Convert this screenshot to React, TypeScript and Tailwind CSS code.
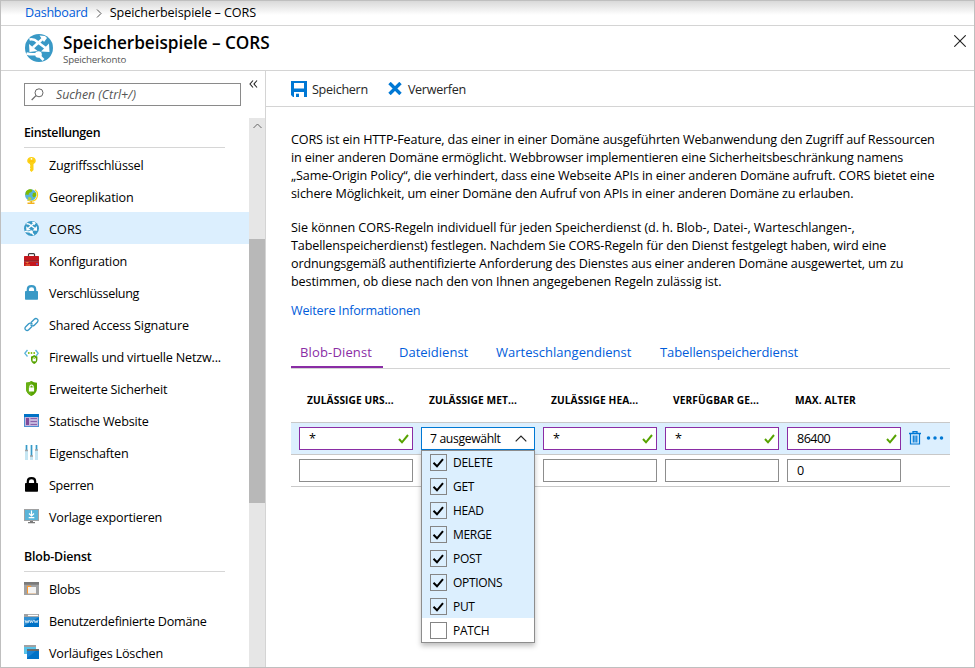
import type { ReactNode } from "react";

function Globe({ size }: { size: number }) {
  return (
    <svg width={size} height={size} viewBox="0 0 28 28" className="shrink-0">
      <circle cx="14" cy="14" r="14" fill="#3999c6" />
      <g fill="none" stroke="#fff" strokeWidth="2.6">
        <path d="M4.500 5.500C8 4.500 10 5.500 12.500 8L20.500 14" />
        <path d="M18 4.500L8 13.500" />
        <path d="M1.500 19.500C5 20.500 8 20.500 12 20" />
        <path d="M15 22.500L18.500 26" />
      </g>
      <g fill="#fff">
        <path d="M14.500 1.500L20 2L22 4L19 8Z" />
        <path d="M4 10L4.500 18L12.500 17Z" />
        <path d="M24 9.500L24.500 18L16 17.500Z" />
        <circle cx="13.500" cy="20.500" r="3.300" />
      </g>
    </svg>
  );
}

function Icon({ children }: { children: ReactNode }) {
  return (
    <svg width="15" height="15" viewBox="0 0 15 15" className="shrink-0">
      {children}
    </svg>
  );
}

const keyIcon = (
  <Icon>
    <path d="M7.500 0C10 0 11.800 1.500 11.800 3.800C11.800 5.500 10.600 6.500 9.500 7V13L7.500 15L6 13.500V12.300L6.600 11.500L6 10.700V9.700L6.600 8.900L6 8V7C4.400 6.500 3.200 5.500 3.200 3.800C3.200 1.500 5 0 7.500 0Z" fill="#fcd116" />
    <circle cx="7.500" cy="1.800" r=".9" fill="#fff" />
    <path d="M5 3.700H10V4.500H5Z" fill="#ffb900" />
  </Icon>
);
const geoIcon = (
  <Icon>
    <path d="M11 .8C15.200 4 14.200 12.200 7 12.200L3 11" fill="none" stroke="#fcd116" strokeWidth="1.200" />
    <path d="M6.500 12H8V13.400H10.500V15H3.500V13.400H6.500Z" fill="#f2b01e" />
    <circle cx="6.700" cy="5.900" r="5.700" fill="#59b4d9" />
    <path d="M2 2.500C4 0 7 0 8.500 .8L7.500 3L5 4L4.500 6L2.500 5.500L1.300 6Z" fill="#7fba00" />
    <path d="M9 4L11.800 3.500L12.300 6.500L10 8.500L8.300 7Z" fill="#7fba00" />
    <path d="M4.500 8L7 8.500L7.500 10L6 11.300L4 10.500Z" fill="#b8d432" />
  </Icon>
);
const toolboxIcon = (
  <Icon>
    <path d="M4.500 3.500V1.600Q4.500 .7 5.400 .7H9.600Q10.500 .7 10.500 1.600V3.500" fill="none" stroke="#3e3e3e" strokeWidth="1.200" />
    <rect x="0" y="3" width="15" height="4.800" rx=".5" fill="#c4171d" />
    <rect x="0" y="8.300" width="15" height="4.700" fill="#c4171d" />
    <rect x="0" y="7.300" width="15" height="1.200" fill="#7e1116" />
    <path d="M1 9H5L3.500 10.500ZM1.500 11.500H6V12.500H1.500Z" fill="#e8823a" />
    <rect x="12" y="10" width="2" height="2" fill="#804998" />
  </Icon>
);
const padlock = (color: string) => (
  <Icon>
    <path d="M3.800 7V4.500C3.800 2.200 5.200 1.200 7.500 1.200S11.200 2.200 11.200 4.500V7" fill="none" stroke={color} strokeWidth="2.200" />
    <rect x="1" y="6" width="13" height="8.800" rx=".7" fill={color} />
  </Icon>
);
const linkIcon = (
  <Icon>
    <g fill="none" stroke="#3999c6" strokeWidth="1.350" strokeLinecap="round">
      <path d="M7.300 5.200L10.300 2.200C12.300 .2 15.500 3 13.300 5.200L10.300 8.200C9.300 9.200 7.700 9 6.900 8" />
      <path d="M7.700 9.800L4.700 12.800C2.700 14.800 -.5 12 1.700 9.800L4.700 6.800C5.700 5.800 7.300 6 8.100 7" />
    </g>
  </Icon>
);
const firewallIcon = (
  <Icon>
    <path d="M3.500 1L.8 4.300L3.500 7.500M11.500 1L14.200 4.300L12 7" fill="none" stroke="#59b4d9" strokeWidth="1.300" />
    <g fill="#7fba00"><circle cx="4.800" cy="4" r=".9" /><circle cx="7.500" cy="4" r=".9" /><circle cx="10.200" cy="4" r=".9" /></g>
    <path d="M7 7.500Q8.800 7.300 10.200 6Q11.600 7.300 13.400 7.500V10.500C13.400 12.700 12 14.200 10.200 15C8.400 14.200 7 12.700 7 10.500Z" fill="#57a300" />
    <rect x="8.600" y="9.700" width="3.300" height="2.600" fill="#fff" />
    <path d="M9.200 10V9Q10.200 7.800 11.300 9V10" fill="none" stroke="#fff" strokeWidth=".7" />
  </Icon>
);
const shieldIcon = (
  <Icon>
    <path d="M2 1.700Q5.500 1.500 7.500 0Q9.500 1.500 13 1.700V7.500C13 11 10.700 13.500 7.500 15C4.300 13.500 2 11 2 7.500Z" fill="#57a300" />
    <path d="M2 1.700Q5.500 1.500 7.500 0L7.500 15C4.300 13.500 2 11 2 7.500Z" fill="#68b015" />
    <rect x="4.900" y="6.500" width="5.200" height="4" fill="#fff" />
    <path d="M5.900 6.700V5Q7.500 2.900 9.100 5V6.700" fill="none" stroke="#fff" strokeWidth="1.100" />
  </Icon>
);
const websiteIcon = (
  <Icon>
    <rect y="1" width="15" height="13" fill="#4f8fd0" />
    <rect y="1" width="15" height="3" fill="#0072c6" />
    <rect x="1" y="4" width="13" height="9" fill="#c4b5dc" />
    <rect x="2" y="5" width="3" height="7" fill="#804998" />
    <path d="M6.500 5.500H13M6.500 8.500H13M6.500 11.500H13" stroke="#8a62ab" />
  </Icon>
);
const slidersIcon = (
  <Icon>
    <rect x="1" y="0" width="3" height="15" fill="#c5e6f3" />
    <rect x="6" y="0" width="3" height="15" fill="#c5e6f3" />
    <rect x="11" y="0" width="3" height="15" fill="#c5e6f3" />
    <path d="M2.500 0V6M7.500 0V11M12.500 0V5" stroke="#3999c6" strokeWidth="1.200" />
    <path d="M1 5.500H4M6 11H9M11 5H14" stroke="#a0a1a2" strokeWidth="1.500" />
  </Icon>
);
const exportIcon = (
  <Icon>
    <rect y="0" width="15" height="12" fill="#a0a1a2" />
    <rect x="1" y="1" width="13" height="10" fill="#59b4d9" />
    <path d="M7.500 1.500V6.500M5 4.500L7.500 7L10 4.500M4.700 8.700H10.300" fill="none" stroke="#fff" strokeWidth="1.200" />
    <path d="M6 12H9V13H11V14.300H4V13H6Z" fill="#7a7a7a" />
  </Icon>
);
const blobsIcon = (
  <Icon>
    <rect y="1" width="15" height="13" fill="#a0a1a2" />
    <rect y="1" width="15" height="2.700" fill="#7a7a7a" />
    <path d="M3 4.700H6.500L7.500 6H12V12.500H3Z" fill="#ff9a2e" />
    <rect x="4" y="6" width="8" height="6.500" fill="#f3f3f3" />
  </Icon>
);
const domainIcon = (
  <Icon>
    <rect y="1" width="15" height="13" fill="#0072c6" />
    <rect y="1" width="15" height="3" fill="#a0a1a2" />
    <rect x="4" y="1.800" width="10" height="1.300" fill="#fff" />
    <path d="M0 4H15L0 13Z" fill="#3390d2" />
    <path d="M1 7L2 9.800L3 7.700L4 9.800L5 7M5.700 7L6.600 9.800L7.600 7.700L8.500 9.800L9.500 7M10.200 7L11.100 9.800L12.100 7.700L13 9.800L14 7" fill="none" stroke="#fff" strokeWidth=".7" />
  </Icon>
);
const softDeleteIcon = (
  <Icon>
    <rect x="0" y="0" width="12" height="9" fill="#59c3e8" />
    <rect x="0" y="0" width="12" height="2" fill="#a0a1a2" />
    <rect x="3" y="4" width="12" height="10" fill="#0072c6" />
    <rect x="3" y="4" width="12" height="2" fill="#6b6b6b" />
    <path d="M3 6H12L3 13Z" fill="#1a82d2" />
  </Icon>
);

type NavItem = { label: string; icon: ReactNode; tracking: string; active?: boolean };

const settings: NavItem[] = [
  { label: "Zugriffsschlüssel", icon: keyIcon, tracking: "tracking-[-0.18px]" },
  { label: "Georeplikation", icon: geoIcon, tracking: "tracking-[-0.15px]" },
  { label: "CORS", icon: <Globe size={15} />, tracking: "tracking-[0.1px]", active: true },
  { label: "Konfiguration", icon: toolboxIcon, tracking: "tracking-[-0.15px]" },
  { label: "Verschlüsselung", icon: padlock("#3999c6"), tracking: "tracking-[-0.32px]" },
  { label: "Shared Access Signature", icon: linkIcon, tracking: "tracking-[-0.15px]" },
  { label: "Firewalls und virtuelle Netzw...", icon: firewallIcon, tracking: "tracking-[-0.19px]" },
  { label: "Erweiterte Sicherheit", icon: shieldIcon, tracking: "tracking-[-0.19px]" },
  { label: "Statische Website", icon: websiteIcon, tracking: "tracking-[-0.22px]" },
  { label: "Eigenschaften", icon: slidersIcon, tracking: "tracking-[-0.2px]" },
  { label: "Sperren", icon: padlock("#000"), tracking: "tracking-[-0.3px]" },
  { label: "Vorlage exportieren", icon: exportIcon, tracking: "tracking-[-0.17px]" },
];
const blobService: NavItem[] = [
  { label: "Blobs", icon: blobsIcon, tracking: "tracking-[-0.25px]" },
  { label: "Benutzerdefinierte Domäne", icon: domainIcon, tracking: "tracking-[-0.24px]" },
  { label: "Vorläufiges Löschen", icon: softDeleteIcon, tracking: "tracking-[-0.18px]" },
];

function NavGroup({ title, titleTracking, items }: { title: string; titleTracking: string; items: NavItem[] }) {
  return (
    <section>
      <h2 className={`mr-6 ml-[23px] h-[30px] border-b border-[#d6d6d6] pt-1.5 text-[12.4px] leading-[18px] font-semibold ${titleTracking}`}>{title}</h2>
      <ul>
        {items.map((item) => (
          <li key={item.label} className={`flex h-8 items-center gap-[10px] pl-[23px] ${item.active ? "bg-[#dceffe]" : ""}`}>
            {item.icon}
            <span className={`pt-1 leading-[18px] whitespace-nowrap ${item.tracking}`}>{item.label}</span>
          </li>
        ))}
      </ul>
    </section>
  );
}

function Field({ value, valid }: { value: string; valid?: boolean }) {
  return (
    <div className={`flex h-[23px] w-[114px] items-center justify-between border bg-white pr-[3px] pl-[9px] ${valid ? "border-[#8a2da5]" : "border-[#8d8d8d]"}`}>
      <span className="leading-[18px] tracking-[-0.55px]">{value}</span>
      {valid && (
        <svg width="11" height="10" viewBox="0 0 11 10" className="mt-px">
          <path d="M1 5L4 8.300L10 1" fill="none" stroke="#57a300" strokeWidth="2" />
        </svg>
      )}
    </div>
  );
}

const methods = ["DELETE", "GET", "HEAD", "MERGE", "POST", "OPTIONS", "PUT", "PATCH"];

function MethodSelect() {
  return (
    <div className="relative">
      <div className="flex h-[23px] w-[114px] items-center justify-between border border-[#0078d4] bg-white pr-[7px] pl-2">
        <span className="text-[12.2px] leading-[18px] tracking-[-0.36px]">7 ausgewählt</span>
        <svg width="12" height="7" viewBox="0 0 12 7">
          <path d="M.7 6.300L6 1L11.300 6.300" fill="none" stroke="#222" strokeWidth="1.200" />
        </svg>
      </div>
      <ul className="absolute top-[23px] left-0 z-10 w-[114px] border border-[#8d8d8d] bg-white shadow-[0_3px_5px_rgba(0,0,0,0.25)]">
        {methods.map((method) => (
          <li key={method} className={`flex h-6 items-start gap-1.5 pt-1 pl-2 first:h-[23px] first:pt-[3px] ${method !== "PATCH" ? "bg-[#dceffe]" : ""}`}>
            <span className="flex size-[17px] items-center justify-center border border-[#858585]">
              {method !== "PATCH" && (
                <svg width="13" height="12" viewBox="0 0 13 12">
                  <path d="M1.500 5.800L5 9.300L11 2.200" fill="none" stroke="#000" strokeWidth="2" />
                </svg>
              )}
            </span>
            <span className="text-[12px] leading-[18px] tracking-[-0.32px]">{method}</span>
          </li>
        ))}
      </ul>
    </div>
  );
}

const columns = ["ZULÄSSIGE URS...", "ZULÄSSIGE MET...", "ZULÄSSIGE HEA...", "VERFÜGBAR GE...", "MAX. ALTER"];

export default function App() {
  return (
    <div className="flex h-[668px] w-[975px] flex-col overflow-hidden border border-[#bfbfbf] bg-white font-['Open_Sans','Noto_Sans',sans-serif] text-[12.6px] text-black">
      <nav className="flex h-[25px] shrink-0 items-center border-b border-[#d4d4d4] bg-linear-to-b from-[#d9d9d9] to-white to-[14px] pl-6 whitespace-nowrap">
        <a className="tracking-[-0.25px] text-[#015cda]">Dashboard</a>
        <svg width="6" height="9" viewBox="0 0 6 9" className="mr-2 ml-2">
          <path d="M1 .5L5 4.500L1 8.500" fill="none" stroke="#555" />
        </svg>
        <span className="tracking-[-0.08px]">Speicherbeispiele – CORS</span>
      </nav>

      <header className="flex h-[45px] shrink-0 border-b border-[#d4d4d4] pl-6">
        <div className="mt-2"><Globe size={28} /></div>
        <div className="ml-[10px]">
          <h1 className="mt-1.5 text-[17.2px] leading-[22px] font-semibold tracking-[-0.05px]">Speicherbeispiele – CORS</h1>
          <p className="text-[9.700px] leading-3 tracking-[-0.15px] text-[#555]">Speicherkonto</p>
        </div>
        <svg width="12" height="12" viewBox="0 0 12 12" className="mt-[9px] mr-2 ml-auto">
          <path d="M.3 .3L11.700 11.700M11.700 .3L.3 11.700" stroke="#222" strokeWidth="1.100" />
        </svg>
      </header>

      <div className="flex min-h-0 flex-1">
        <aside className="flex w-[265px] shrink-0 flex-col border-r border-[#d4d4d4]">
          <div className="flex h-[47px] shrink-0 pt-3 pl-[23px]">
            <div className="flex h-[23px] w-[217px] items-center border border-[#8a8a8a] pl-[6px] text-[#555] italic">
              <svg width="13" height="13" viewBox="0 0 13 13">
                <circle cx="8" cy="4.800" r="4" fill="none" stroke="#666" />
                <path d="M5 7.700L.7 12" stroke="#666" strokeWidth="1.200" />
              </svg>
              <span className="ml-3 pt-0.5 text-[12.3px]">Suchen (Ctrl+/)</span>
            </div>
            <svg width="9" height="8" viewBox="0 0 9 8" className="-mt-[3px] ml-2">
              <path d="M4 .5L1 4L4 7.500M8 .5L5 4L8 7.500" fill="none" stroke="#222" strokeWidth="1.100" />
            </svg>
          </div>
          <div className="flex min-h-0 flex-1 overflow-hidden">
            <div className="flex w-[248px] flex-col gap-[10px]">
              <NavGroup title="Einstellungen" titleTracking="tracking-[-0.36px]" items={settings} />
              <NavGroup title="Blob-Dienst" titleTracking="tracking-[-0.16px]" items={blobService} />
            </div>
            <div className="w-4 bg-[#e6e6e6]">
              <div className="flex h-[121px] justify-center pt-[5px]">
                <svg width="9" height="6" viewBox="0 0 9 6">
                  <path d="M.5 5L4.500 1L8.500 5" fill="none" stroke="#666" />
                </svg>
              </div>
              <div className="h-[264px] bg-[#b8b8b8]" />
            </div>
          </div>
        </aside>

        <main className="min-w-0 flex-1">
          <div className="flex h-9 items-center border-b border-[#d4d4d4] pl-[25px] text-[#252525]">
            <svg width="16" height="16" viewBox="0 0 16 16">
              <path fillRule="evenodd" d="M0 0H16V16H13V11H3V16H2L0 14ZM3 2V7.500H13V2Z" fill="#0078d4" />
              <rect x="5" y="12.700" width="3" height="3.300" fill="#0078d4" />
            </svg>
            <span className="ml-[5px] pt-1 tracking-[-0.3px]">Speichern</span>
            <svg width="14" height="13" viewBox="0 0 14 13" className="ml-5">
              <path d="M1.500 1L12.500 12M12.500 1L1.500 12" stroke="#0078d4" strokeWidth="3.400" />
            </svg>
            <span className="ml-1.5 pt-1 tracking-[-0.3px]">Verwerfen</span>
          </div>

          <div className="pt-[24px] pl-[25px] leading-[18px] whitespace-nowrap">
            <p className="tracking-[-0.133px]">
              CORS ist ein HTTP-Feature, das einer in einer Domäne ausgeführten Webanwendung den Zugriff auf Ressourcen<br />
              in einer anderen Domäne ermöglicht. Webbrowser implementieren eine Sicherheitsbeschränkung namens<br />
              „Same-Origin Policy“, die verhindert, dass eine Webseite APIs in einer anderen Domäne aufruft. CORS bietet eine<br />
              sichere Möglichkeit, um einer Domäne den Aufruf von APIs in einer anderen Domäne zu erlauben.
            </p>
            <p className="mt-4 tracking-[-0.13px]">
              <span className="tracking-[-0.07px]">Sie können CORS-Regeln individuell für jeden Speicherdienst (d. h. Blob-, Datei-, Warteschlangen-,</span><br />
              Tabellenspeicherdienst) festlegen. Nachdem Sie CORS-Regeln für den Dienst festgelegt haben, wird eine<br />
              <span className="tracking-[-0.16px]">ordnungsgemäß authentifizierte Anforderung des Dienstes aus einer anderen Domäne ausgewertet, um zu</span><br />
              <span className="tracking-[-0.1px]">bestimmen, ob diese nach den von Ihnen angegebenen Regeln zulässig ist.</span>
            </p>
            <a className="mt-[11px] block tracking-[-0.2px] text-[#015cda]">Weitere Informationen</a>

            <div className="mt-[17px] flex h-8 w-[659px] border-b border-[#d4d4d4] text-[13px] text-[#015cda]">
              <span className="h-[31px] w-[92px] border-b-2 border-[#8a2da5] pt-1.5 pl-[9px] tracking-[0.15px] text-[#8a2da5]">Blob-Dienst</span>
              <span className="ml-4 w-[69px] pt-1.5">Dateidienst</span>
              <span className="ml-7 w-[136px] pt-1.5 tracking-[0.02px]">Warteschlangendienst</span>
              <span className="ml-7 pt-1.5 tracking-[-0.1px]">Tabellenspeicherdienst</span>
            </div>

            <div className="w-[659px]">
              <div className="flex h-[53px] pt-[22px] pl-4">
                {columns.map((column) => (
                  <span key={column} className="w-[122px] text-[10.200px] font-bold tracking-[0.08px]">{column}</span>
                ))}
              </div>
              <div className="flex h-[33px] gap-2 border-y border-[#c8c8c8] bg-[#dceffe] pt-1 pl-2">
                <Field value="*" valid />
                <MethodSelect />
                <Field value="*" valid />
                <Field value="*" valid />
                <Field value="86400" valid />
                <svg width="12" height="14" viewBox="0 0 12 14" className="mt-1">
                  <path d="M0 2.500H12M4 2V.7H8V2" fill="none" stroke="#0078d4" strokeWidth="1.300" />
                  <path d="M1.500 3V13H10.500V3M4.300 4.500V11.500M6 4.500V11.500M7.800 4.500V11.500" fill="none" stroke="#0078d4" strokeWidth="1.200" />
                </svg>
                <svg width="18" height="4" viewBox="0 0 18 4" className="mt-[9px] -ml-[3px]" fill="#0078d4">
                  <circle cx="2.500" cy="2" r="1.750" /><circle cx="9" cy="2" r="1.750" /><circle cx="15.500" cy="2" r="1.750" />
                </svg>
              </div>
              <div className="flex h-8 gap-2 border-b border-[#c8c8c8] pt-1 pl-2">
                <Field value="" />
                <div className="w-[114px]" />
                <Field value="" />
                <Field value="" />
                <Field value="0" />
              </div>
            </div>
          </div>
        </main>
      </div>
    </div>
  );
}
